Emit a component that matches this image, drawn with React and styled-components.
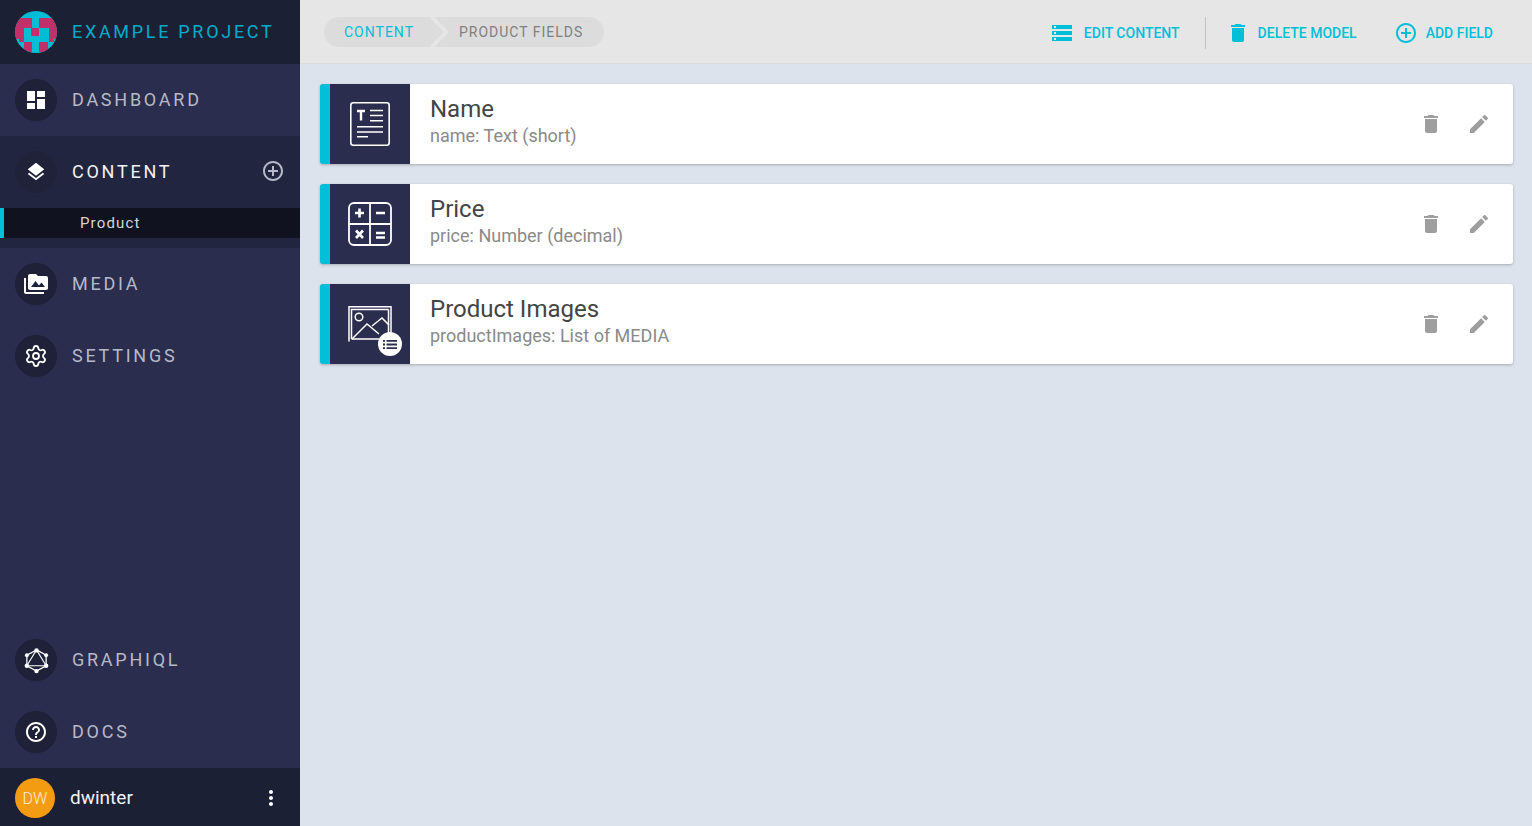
import React from 'react';
import styled, { createGlobalStyle } from 'styled-components';
import { Settings } from 'lucide-react';
import {
  MdDashboard,
  MdLayers,
  MdPermMedia,
  MdAddCircleOutline,
  MdDelete,
  MdEdit,
  MdMoreVert,
  MdHelpOutline,
  MdStorage,
} from 'react-icons/md';

const GlobalStyle = createGlobalStyle`
  html, body { margin: 0; padding: 0; height: 100%; }
  body { font-family: Roboto, "Liberation Sans", sans-serif; overflow: hidden; }
  #root { height: 100%; }
`;

const cyan = '#00bfd8';

const Layout = styled.div`
  display: flex;
  width: 1532px;
  height: 826px;
  background: #dce3ec;
`;

const Sidebar = styled.aside`
  width: 300px;
  flex-shrink: 0;
  display: flex;
  flex-direction: column;
  background: #2a2d4d;
`;

const Brand = styled.div`
  height: 64px;
  display: flex;
  align-items: center;
  gap: 15px;
  padding-left: 15px;
  background: #1c2035;
  color: #00acc8;
  font-size: 18px;
  letter-spacing: 2.7px;
`;

const NavItem = styled.div`
  height: 72px;
  display: flex;
  align-items: center;
  gap: 15px;
  padding: 0 15px;
  color: ${p => (p.$active ? '#f2f2f5' : '#b7b9c8')};
  font-size: 18px;
  letter-spacing: 2.75px;
`;

const NavLabel = styled.span`
  padding-bottom: 2px;
`;

const NavIcon = styled.div`
  width: 42px;
  height: 42px;
  border-radius: 50%;
  flex-shrink: 0;
  display: flex;
  align-items: center;
  justify-content: center;
  background: ${p => (p.$active ? '#1f2239' : '#1e2138')};
  color: #fff;
  font-size: ${p => p.$size || 24}px;
`;

const ActiveSection = styled.div`
  height: 112px;
  background: #222540;
`;

const AddButton = styled.div`
  margin-left: auto;
  margin-bottom: 3px;
  display: flex;
  color: #b7b9c8;
  font-size: 24px;
`;

const SubItem = styled.div`
  height: 30px;
  display: flex;
  align-items: center;
  padding-left: 76px;
  border-left: 4px solid ${cyan};
  background: #11121f;
  color: #d4d5dc;
  font-size: 15px;
  letter-spacing: 1.15px;
`;

const Spacer = styled.div`
  flex: 1;
`;

const Footer = styled.div`
  height: 58px;
  box-sizing: border-box;
  display: flex;
  align-items: center;
  gap: 15px;
  padding: 2px 17px 0 15px;
  background: #1c2035;
  color: #f2f2f5;
  font-size: 19px;
`;

const Avatar = styled.div`
  width: 40px;
  height: 40px;
  border-radius: 50%;
  display: flex;
  align-items: center;
  justify-content: center;
  background: #f39c12;
  color: #fbeed8;
  font-size: 16px;
  font-weight: 300;
`;

const UserName = styled.span`
  padding-bottom: 2px;
`;

const FooterMenu = styled.div`
  margin-left: auto;
  display: flex;
  color: #fff;
  font-size: 24px;
`;

const Main = styled.main`
  flex: 1;
  display: flex;
  flex-direction: column;
`;

const TopBar = styled.header`
  height: 64px;
  box-sizing: border-box;
  display: flex;
  align-items: center;
  justify-content: space-between;
  padding: 0 39px 0 24px;
  background: #e6e6e6;
  border-bottom: 1px solid #dcdcdc;
`;

const Breadcrumb = styled.nav`
  height: 30px;
  display: flex;
  align-items: center;
  padding: 0 21px 0 20px;
  border-radius: 15px;
  background: #dcdcdc;
  font-size: 14px;
  letter-spacing: 1px;
`;

const Crumb = styled.span`
  color: ${p => (p.$link ? cyan : '#808080')};
`;

const CrumbArrow = styled.svg`
  width: 18px;
  height: 30px;
  margin: 0 10px 0 17px;
  display: block;
`;

const Actions = styled.div`
  display: flex;
  align-items: center;
  margin-top: 2px;
`;

const ActionButton = styled.div`
  display: flex;
  align-items: center;
  gap: ${p => p.$gap || 10}px;
  margin-left: ${p => p.$offset || 0}px;
  color: ${cyan};
  font-size: 14px;
  font-weight: 500;
`;

const ActionIcon = styled.span`
  display: flex;
  font-size: 24px;
`;

const Divider = styled.div`
  width: 1px;
  height: 32px;
  margin: 0 20px 0 25px;
  background: #c4c4c4;
`;

const FieldList = styled.div`
  display: flex;
  flex-direction: column;
  gap: 20px;
  padding: 20px 19px 0 20px;
`;

const FieldCard = styled.div`
  height: 80px;
  display: flex;
  align-items: center;
  border-left: 10px solid ${cyan};
  border-radius: 3px;
  background: #fff;
  box-shadow: 0 1px 3px rgba(0, 0, 0, 0.25);
`;

const FieldIcon = styled.div`
  position: relative;
  width: 80px;
  height: 80px;
  flex-shrink: 0;
  display: flex;
  align-items: center;
  justify-content: center;
  background: #2a2d4d;
`;

const ListBadge = styled.div`
  position: absolute;
  left: 48px;
  top: 48px;
  width: 24px;
  height: 24px;
  border-radius: 50%;
  display: flex;
  align-items: center;
  justify-content: center;
  background: #fff;
`;

const FieldText = styled.div`
  flex: 1;
  padding: 0 0 3px 20px;
`;

const FieldName = styled.div`
  color: #444;
  font-size: 24px;
  line-height: 24px;
  margin-bottom: 3px;
`;

const FieldType = styled.div`
  color: #8a8a8a;
  font-size: 18px;
  line-height: 24px;
`;

const FieldTools = styled.div`
  display: flex;
  align-items: center;
  gap: 24px;
  padding-right: 22px;
  color: #9e9e9e;
  font-size: 24px;
  svg { display: block; }
`;

const Logo = () => (
  <svg width="42" height="42" viewBox="0 0 42 42">
    <defs>
      <clipPath id="logo-clip"><circle cx="21" cy="21" r="21" /></clipPath>
    </defs>
    <g clipPath="url(#logo-clip)">
      <rect width="42" height="42" fill="#00bcd4" />
      <path
        fill="#c2306a"
        d="M0 7h17v10H9v14H4v-3H0zM24 7h18v21h-3v3h-5V17h-10zM16 17h8v8h-8zM9 31h8v10H9zM24 31h9v10h-9z"
      />
    </g>
  </svg>
);

const GraphqlIcon = () => (
  <svg width="27" height="27" viewBox="0 0 28 28" fill="none" stroke="#fff" strokeWidth="1.1">
    <path d="M14 3 24 8.500v11L14 25 4 19.500v-11z" strokeWidth="1.300" />
    <path d="M14 3 24 19.500H4z" />
    <g fill="#fff" stroke="none">
      <circle cx="14" cy="3.500" r="2.300" />
      <circle cx="24" cy="8.500" r="2" />
      <circle cx="24" cy="19.500" r="2.300" />
      <circle cx="14" cy="25" r="2.300" />
      <circle cx="4" cy="19.500" r="2.300" />
      <circle cx="4" cy="8.500" r="2" />
    </g>
  </svg>
);

const TextFieldIcon = () => (
  <svg width="40" height="44" viewBox="0 0 40 44" fill="none" stroke="#fff" strokeWidth="1.600">
    <rect x="0.800" y="0.800" width="38.400" height="42.400" rx="2.500" />
    <path d="M7 9h8M11 9v9.600" strokeWidth="2.400" />
    <path d="M20 8.500h13M20 13.500h13M20 18.700h13M7 24.700h26M7 30h26M7 34.700h11" />
  </svg>
);

const NumberFieldIcon = () => (
  <svg width="44" height="44" viewBox="0 0 44 44" fill="none" stroke="#fff" strokeWidth="1.800">
    <rect x="1" y="1" width="42" height="42" rx="5" />
    <path d="M22 1v42M1 22h42" />
    <path d="M7 11h9M11.500 6.500v9M28 11h9" strokeWidth="2.600" />
    <path d="M8 28.500l7 7.500M15 28.500l-7 7.500M28 31h9M28 35.500h9" strokeWidth="2.600" />
  </svg>
);

const MediaFieldIcon = () => (
  <svg width="44" height="36" viewBox="0 0 44 36" fill="none" stroke="#fff" strokeWidth="1.500">
    <path d="M1 35.500V.8h42v26" />
    <path d="M3.500 33V3.500h37" />
    <path d="M3.500 33h28M40.500 3.500v24" />
    <circle cx="11" cy="11" r="3.800" />
    <path d="M4 33l15-15 12 10M24 20l10-8 7 7" />
  </svg>
);

const ListGlyph = () => (
  <svg width="14" height="9" viewBox="0 0 14 9" fill="#2a2d4d">
    <path d="M0 0h2v1.800H0zM3.500 0H14v1.800H3.500zM0 3.600h2v1.800H0zM3.500 3.600H14v1.800H3.500zM0 7.200h2V9H0zM3.500 7.200H14V9H3.500z" />
  </svg>
);

const fields = [
  { name: 'Name', type: 'name: Text (short)', icon: <TextFieldIcon /> },
  { name: 'Price', type: 'price: Number (decimal)', icon: <NumberFieldIcon /> },
  {
    name: 'Product Images',
    type: 'productImages: List of MEDIA',
    icon: (
      <>
        <MediaFieldIcon />
        <ListBadge><ListGlyph /></ListBadge>
      </>
    ),
  },
];

export default function App() {
  return (
    <Layout>
      <GlobalStyle />
      <Sidebar>
        <Brand>
          <Logo />
          <NavLabel>EXAMPLE PROJECT</NavLabel>
        </Brand>
        <NavItem>
          <NavIcon><MdDashboard /></NavIcon>
          <NavLabel>DASHBOARD</NavLabel>
        </NavItem>
        <ActiveSection>
          <NavItem $active>
            <NavIcon $active $size={22}><MdLayers /></NavIcon>
            <NavLabel>CONTENT</NavLabel>
            <AddButton><MdAddCircleOutline /></AddButton>
          </NavItem>
          <SubItem>Product</SubItem>
        </ActiveSection>
        <NavItem>
          <NavIcon><MdPermMedia /></NavIcon>
          <NavLabel>MEDIA</NavLabel>
        </NavItem>
        <NavItem>
          <NavIcon><Settings size={24} strokeWidth={1.800} /></NavIcon>
          <NavLabel>SETTINGS</NavLabel>
        </NavItem>
        <Spacer />
        <NavItem>
          <NavIcon><GraphqlIcon /></NavIcon>
          <NavLabel>GRAPHIQL</NavLabel>
        </NavItem>
        <NavItem>
          <NavIcon><MdHelpOutline /></NavIcon>
          <NavLabel>DOCS</NavLabel>
        </NavItem>
        <Footer>
          <Avatar>DW</Avatar>
          <UserName>dwinter</UserName>
          <FooterMenu><MdMoreVert /></FooterMenu>
        </Footer>
      </Sidebar>
      <Main>
        <TopBar>
          <Breadcrumb>
            <Crumb $link>CONTENT</Crumb>
            <CrumbArrow viewBox="0 0 18 30" fill="none">
              <path d="M0 -1 15 15 0 31" stroke="#e6e6e6" strokeWidth="4" />
            </CrumbArrow>
            <Crumb>PRODUCT FIELDS</Crumb>
          </Breadcrumb>
          <Actions>
            <ActionButton>
              <ActionIcon><MdStorage /></ActionIcon>
              EDIT CONTENT
            </ActionButton>
            <Divider />
            <ActionButton $gap={8}>
              <ActionIcon><MdDelete /></ActionIcon>
              DELETE MODEL
            </ActionButton>
            <ActionButton $gap={8} $offset={37}>
              <ActionIcon><MdAddCircleOutline /></ActionIcon>
              ADD FIELD
            </ActionButton>
          </Actions>
        </TopBar>
        <FieldList>
          {fields.map(field => (
            <FieldCard key={field.name}>
              <FieldIcon>{field.icon}</FieldIcon>
              <FieldText>
                <FieldName>{field.name}</FieldName>
                <FieldType>{field.type}</FieldType>
              </FieldText>
              <FieldTools>
                <MdDelete />
                <MdEdit />
              </FieldTools>
            </FieldCard>
          ))}
        </FieldList>
      </Main>
    </Layout>
  );
}
